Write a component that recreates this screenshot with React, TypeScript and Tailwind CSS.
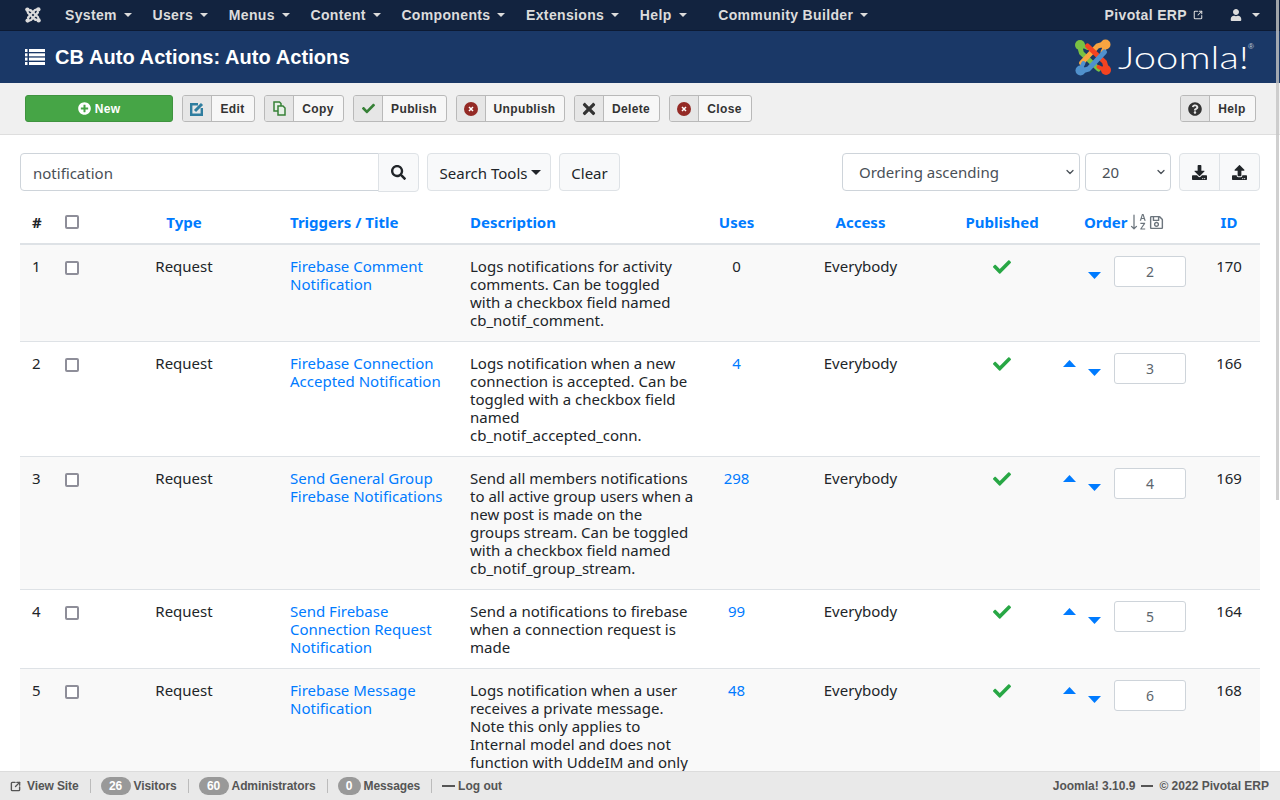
import React from "react";
import { FaCheck, FaTimes, FaQuestionCircle, FaPlusCircle, FaSearch, FaDownload, FaUpload, FaRegSave, FaUser } from "react-icons/fa";
import { BsSortAlphaDown } from "react-icons/bs";
import { SquareArrowOutUpRight, ChevronDown } from "lucide-react";

const sans = "font-['Liberation_Sans',Arial,sans-serif]";

function Pinwheel({ className, colors }: { className?: string; colors: string[] }) {
  const angles = [0, 90, 180, 270];
  return (
    <svg viewBox="0 0 37 37" className={className} fill="none">
      {angles.map((a, i) => (
        <g key={a} transform={`rotate(${a} 18.5 18.5)`}>
          <circle cx="5.5" cy="6" r="5" fill={colors[i]} />
          <path d="M5 7 L7 14 L24 30" stroke={colors[i]} strokeWidth="5" strokeLinecap="round" strokeLinejoin="round" />
          <path d="M7 6 L13 9" stroke={colors[i]} strokeWidth="4" strokeLinecap="round" />
        </g>
      ))}
    </svg>
  );
}

function Caret({ className }: { className?: string }) {
  return <span className={`inline-block w-0 h-0 border-x-[4px] border-x-transparent border-t-[4px] border-t-[#dcdcdc] ${className ?? ""}`} />;
}

const nav = ["System", "Users", "Menus", "Content", "Components", "Extensions", "Help"];

function NavItem({ label }: { label: string }) {
  return (
    <span className="flex items-center gap-[7px] text-[14px] font-bold text-[#dcdcdc] tracking-[0.35px]">
      {label}
      <Caret />
    </span>
  );
}

function ToolBtn({ icon, label, w }: { icon: React.ReactNode; label: string; w: string }) {
  return (
    <div className={`flex h-[27px] rounded-[3px] border border-[#b9b9b9] bg-[#f7f7f7] overflow-hidden ${w}`}>
      <span className="flex w-[29px] shrink-0 items-center justify-center border-r border-[#b9b9b9] bg-[#e6e6e6]">{icon}</span>
      <span className="flex flex-1 items-center justify-center pr-[1px] text-[12px] font-bold text-[#333] tracking-[0.35px]">{label}</span>
    </div>
  );
}

const UnpublishIcon = () => (
  <svg viewBox="0 0 14 14" className="w-[14px] h-[14px]">
    <circle cx="7" cy="7" r="7" fill="#942a25" />
    <path d="M5 5 L9 9 M9 5 L5 9" stroke="#fff" strokeWidth="1.5" />
  </svg>
);
const EditIcon = () => (
  <svg viewBox="0 0 14 14" className="w-[14px] h-[14px]" fill="none">
    <path d="M8 2.2 H1.2 V12.8 H11.8 V6" stroke="#2f7d9f" strokeWidth="2.4" />
    <path d="M5 9 L12 2" stroke="#2f7d9f" strokeWidth="3" />
  </svg>
);
const CopyIcon = () => (
  <svg viewBox="0 0 13 15" className="w-[13px] h-[15px]" fill="#e6f0e6" stroke="#378137" strokeWidth="1.5">
    <path d="M1 1 H6.5 L8 2.5 V10 H1 Z" />
    <path d="M5 5 H10 L12 7 V14 H5 Z" />
  </svg>
);

const UpArrow = () => (
  <svg viewBox="0 0 13 7" className="block w-[13px] h-[7px] fill-[#007bff]"><path d="M6.5 0 L13 7 H0 Z" /></svg>
);
const DownArrow = () => (
  <svg viewBox="0 0 13 7" className="block w-[13px] h-[7px] fill-[#007bff]"><path d="M0 0 H13 L6.5 7 Z" /></svg>
);

const rows = [
  { n: 1, title: "Firebase Comment Notification", desc: "Logs notifications for activity comments. Can be toggled with a checkbox field named cb_notif_comment.", uses: "0", order: 2, id: 170 },
  { n: 2, title: "Firebase Connection Accepted Notification", desc: "Logs notification when a new connection is accepted. Can be toggled with a checkbox field named cb_notif_accepted_conn.", uses: "4", order: 3, id: 166 },
  { n: 3, title: "Send General Group Firebase Notifications", desc: "Send all members notifications to all active group users when a new post is made on the groups stream. Can be toggled with a checkbox field named cb_notif_group_stream.", uses: "298", order: 4, id: 169 },
  { n: 4, title: "Send Firebase Connection Request Notification", desc: "Send a notifications to firebase when a connection request is made", uses: "99", order: 5, id: 164 },
  { n: 5, title: "Firebase Message Notification", desc: "Logs notification when a user receives a private message. Note this only applies to Internal model and does not function with UddeIM and only", uses: "48", order: 6, id: 168 },
];

const Th = ({ children, className = "" }: { children: React.ReactNode; className?: string }) => (
  <th className={`px-3 h-[41px] pb-[2px] border-b-2 border-[#dee2e6] font-bold text-[#007bff] align-middle ${className}`}>{children}</th>
);

const Check = () => <input type="checkbox" readOnly className="block appearance-none w-[14px] h-[14px] border-2 border-[#8e8e99] rounded-[2px] bg-white" />;

const Sep = () => <span className="ml-[11px] mr-[10px] h-[14px] w-px bg-[#bbb]" />;

export default function App() {
  return (
    <div className="relative h-screen overflow-hidden bg-white font-['Noto_Sans',sans-serif] text-[15px] leading-[18px] text-[#212529]">
      {/* top nav */}
      <div className={`flex h-[31px] items-center border-b border-[#0c1a33] bg-[#12233f] ${sans}`}>
        <Pinwheel className="ml-[25px] w-[16px] h-[16px]" colors={["#dcdcdc", "#dcdcdc", "#dcdcdc", "#dcdcdc"]} />
        <div className="ml-[24px] flex gap-[20.6px]">
          {nav.map((n) => <NavItem key={n} label={n} />)}
          <span className="ml-[11px]"><NavItem label="Community Builder" /></span>
        </div>
        <div className="ml-auto mr-[20px] flex items-center text-[14px] font-bold text-[#dcdcdc] tracking-[0.35px]">
          Pivotal ERP
          <SquareArrowOutUpRight className="ml-[6px] w-[10px] h-[10px]" strokeWidth={2.5} />
          <FaUser className="ml-[27px] w-[12px] h-[12px]" />
          <Caret className="ml-[10px]" />
        </div>
      </div>
      {/* header */}
      <div className={`flex h-[52px] items-center bg-[#1a3867] ${sans}`}>
        <svg viewBox="0 0 20 16" className="ml-[25px] w-[20px] h-[16px] fill-white">
          <rect x="0" y="0" width="2.5" height="3" /><rect x="4" y="0" width="16" height="3" />
          <rect x="0" y="4.3" width="2.5" height="3" /><rect x="4" y="4.3" width="16" height="3" />
          <rect x="0" y="8.6" width="2.5" height="3" /><rect x="4" y="8.6" width="16" height="3" />
          <rect x="0" y="13" width="2.5" height="3" /><rect x="4" y="13" width="16" height="3" />
        </svg>
        <h1 className="ml-[10px] text-[20px] font-bold text-white leading-none tracking-[0.07px]">CB Auto Actions: Auto Actions</h1>
        <div className="ml-auto mr-[25px] flex items-center">
          <Pinwheel className="w-[38px] h-[37px]" colors={["#7ac143", "#f9a541", "#f44321", "#5091cd"]} />
          <span className="ml-[6px] w-[130px] origin-left scale-x-[1.29] font-['Lato',sans-serif] font-light text-[31px] leading-none text-white whitespace-nowrap">Joomla!</span>
          <span className="self-start mt-[4px] w-[7px] text-[8px] leading-none text-[#c8d0dc]">®</span>
        </div>
      </div>
      {/* toolbar */}
      <div className={`flex h-[52px] items-center gap-[9px] border-b border-[#dedede] bg-[#f0f0f0] pl-[25px] pr-[24px] ${sans}`}>
        <div className="flex h-[27px] w-[148px] items-center justify-center gap-[4px] rounded-[3px] border border-[#3f933f] bg-[#46a546] text-[12px] font-bold text-white tracking-[0.35px]">
          <FaPlusCircle className="w-[13px] h-[13px]" /> New
        </div>
        <ToolBtn w="w-[73px]" label="Edit" icon={<EditIcon />} />
        <ToolBtn w="w-[80px]" label="Copy" icon={<CopyIcon />} />
        <ToolBtn w="w-[94px]" label="Publish" icon={<FaCheck className="w-[13px] h-[13px] text-[#378137]" />} />
        <ToolBtn w="w-[109px]" label="Unpublish" icon={<UnpublishIcon />} />
        <ToolBtn w="w-[86px]" label="Delete" icon={<FaTimes className="w-[18px] h-[18px] text-[#333]" />} />
        <ToolBtn w="w-[83px]" label="Close" icon={<UnpublishIcon />} />
        <div className="ml-auto"><ToolBtn w="w-[76px]" label="Help" icon={<FaQuestionCircle className="w-[14px] h-[14px] text-[#333]" />} /></div>
      </div>
      {/* filters */}
      <div className="mx-[20px] mt-[18px] flex items-start text-[#495057]">
        <input readOnly value="notification" className="h-[38px] w-[359px] rounded-l-[4px] border border-[#ced4da] px-3 pt-[2px] outline-none text-[#495057]" />
        <div className="flex h-[39px] w-[41px] -ml-px items-center justify-center rounded-r-[4px] border border-[#dee2e6] bg-[#f8f9fa] text-[#212529]"><FaSearch className="w-[15px] h-[15px]" /></div>
        <div className="ml-[8px] flex h-[38px] w-[124px] items-center justify-center gap-[4px] rounded-[4px] border border-[#dee2e6] bg-[#f8f9fa] pt-[1px] pl-[3px] text-[#212529]">
          Search Tools
          <span className="w-0 h-0 border-x-[5px] border-x-transparent border-t-[5px] border-t-[#212529]" />
        </div>
        <div className="ml-[8px] flex h-[38px] w-[61px] items-center justify-center rounded-[4px] border border-[#dee2e6] bg-[#f8f9fa] pt-[1px] text-[#212529]">Clear</div>
        <div className="relative ml-auto">
          <select defaultValue="o" className="block h-[38px] w-[238px] appearance-none rounded-[4px] border border-[#ced4da] bg-white pl-[16px] leading-[24px] text-[#495057]"><option value="o">Ordering ascending</option></select>
          <ChevronDown className="pointer-events-none absolute right-[4px] top-[13px] w-[12px] h-[12px] text-[#495057]" strokeWidth={2.5} />
        </div>
        <div className="relative ml-[5px]">
          <select defaultValue="20" className="block h-[38px] w-[86px] appearance-none rounded-[4px] border border-[#ced4da] bg-white pl-[16px] leading-[24px] text-[#495057]"><option value="20">20</option></select>
          <ChevronDown className="pointer-events-none absolute right-[4px] top-[13px] w-[12px] h-[12px] text-[#495057]" strokeWidth={2.5} />
        </div>
        <div className="ml-[8px] flex h-[38px] w-[81px] rounded-[4px] border border-[#dee2e6] bg-[#f8f9fa] text-[#212529]">
          <span className="flex flex-1 items-center justify-center border-r border-[#dee2e6]"><FaDownload className="w-[15px] h-[15px]" /></span>
          <span className="flex flex-1 items-center justify-center"><FaUpload className="w-[15px] h-[15px]" /></span>
        </div>
      </div>
      {/* table */}
      <table className="mx-[20px] mt-[11px] w-[1240px] table-fixed border-collapse">
        <colgroup>
          <col className="w-[33px]" /><col className="w-[37px]" /><col className="w-[188px]" /><col className="w-[180px]" /><col className="w-[247px]" /><col className="w-[63px]" /><col className="w-[185px]" /><col className="w-[98px]" /><col className="w-[147px]" /><col className="w-[62px]" />
        </colgroup>
        <thead>
          <tr>
            <th className="px-3 h-[41px] pb-[2px] border-b-2 border-[#dee2e6] text-left font-bold text-[#212529]">#</th>
            <th className="px-3 pb-[2px] border-b-2 border-[#dee2e6]"><Check /></th>
            <Th className="text-center">Type</Th>
            <Th className="text-left">Triggers / Title</Th>
            <Th className="text-left">Description</Th>
            <Th className="text-center">Uses</Th>
            <Th className="text-center">Access</Th>
            <Th className="text-center">Published</Th>
            <Th className="text-left !pl-[33px]">
              <span className="flex items-center whitespace-nowrap">Order
                <BsSortAlphaDown className="ml-[2px] w-[20px] h-[20px] text-[#6c757d]" />
                <FaRegSave className="w-[15px] h-[15px] text-[#6c757d]" />
              </span>
            </Th>
            <Th className="text-center">ID</Th>
          </tr>
        </thead>
        <tbody>
          {rows.map((r, i) => (
            <tr key={r.n} className={`border-b border-[#dee2e6] ${i % 2 === 0 ? "bg-[#f9f9f9]" : "bg-white"}`}>
              <td className="p-3 align-top">{r.n}</td>
              <td className="p-3 align-top"><span className="block mt-[4px]"><Check /></span></td>
              <td className="p-3 align-top text-center">Request</td>
              <td className="p-3 align-top text-[#007bff]">{r.title}</td>
              <td className="py-3 pl-3 pr-[11.4px] align-top">{r.desc}</td>
              <td className={`p-3 align-top text-center ${r.uses === "0" ? "" : "text-[#007bff]"}`}>{r.uses}</td>
              <td className="p-3 align-top text-center">Everybody</td>
              <td className="p-3 align-top"><FaCheck className="mx-auto mt-[1px] w-[18px] h-[18px] text-[#28a745]" /></td>
              <td className="py-3 pr-3 pl-0 align-top">
                <div className="-mt-[1px] -mb-[1px] flex items-start justify-end">
                  {i > 0 && <span className="mt-[7px] mr-[12px]"><UpArrow /></span>}
                  <span className="mt-[16px] mr-[13px]"><DownArrow /></span>
                  <input readOnly value={r.order} className="h-[31px] w-[72px] rounded-[3px] border border-[#ced4da] bg-white text-center text-[14px] text-[#5c656d] outline-none" />
                </div>
              </td>
              <td className="p-3 align-top text-center">{r.id}</td>
            </tr>
          ))}
        </tbody>
      </table>
      {/* status bar */}
      <div className={`absolute inset-x-0 bottom-0 flex h-[29px] items-center justify-between border-t border-[#dcdcdc] bg-[#e9e9e9] pl-[10px] pr-[11px] text-[12px] font-bold text-[#555] ${sans}`}>
        <div className="flex items-center tracking-[-0.1px]">
          <SquareArrowOutUpRight className="w-[11px] h-[11px]" strokeWidth={3} />
          <span className="ml-[6px]">View Site</span>
          <Sep />
          <span className="w-[30px] text-center rounded-full bg-[#999] text-white leading-[18px]">26</span>
          <span className="ml-[3px]">Visitors</span>
          <Sep />
          <span className="w-[30px] text-center rounded-full bg-[#999] text-white leading-[18px]">60</span>
          <span className="ml-[3px]">Administrators</span>
          <Sep />
          <span className="w-[23px] text-center rounded-full bg-[#999] text-white leading-[18px]">0</span>
          <span className="ml-[3px]">Messages</span>
          <Sep />
          <span className="h-[2px] w-[13px] bg-[#555]" />
          <span className="ml-[3px] tracking-normal">Log out</span>
        </div>
        <div className="flex items-center">Joomla! 3.10.9<span className="mx-[6px] h-[2px] w-[12px] bg-[#555]" />© 2022 Pivotal ERP</div>
      </div>
      {/* overlay scrollbar */}
      <div className="absolute right-[1px] top-0 h-[500px] w-[3px] bg-[#c4c4c4]/80" />
    </div>
  );
}
